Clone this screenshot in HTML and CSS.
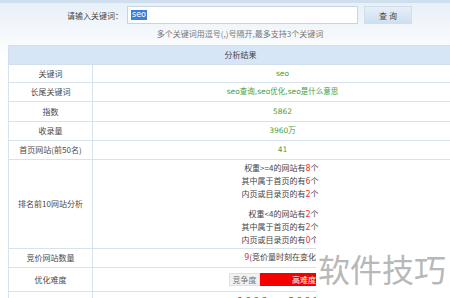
FILE: index.html
```html
<!DOCTYPE html>
<html lang="zh-CN">
<head>
<meta charset="utf-8">
<title>关键词分析</title>
<link rel="stylesheet" href="styles.css">
</head>
<body>
<div class="topband"></div>
<div class="search">
  <label class="search-label">请输入关键词：</label>
  <div class="search-input"><span class="sel">seo</span></div>
  <button class="search-btn">查 询</button>
</div>
<p class="hint">多个关键词用逗号(,)号隔开,最多支持3个关键词</p>
<table class="result">
  <colgroup><col class="col-k"><col class="col-v"></colgroup>
  <tr class="r-head"><th colspan="2">分析结果</th></tr>
  <tr class="r18"><td class="k">关键词</td><td class="v">seo</td></tr>
  <tr class="r19"><td class="k">长尾关键词</td><td class="v">seo查询,seo优化,seo是什么意思</td></tr>
  <tr class="r20"><td class="k">指数</td><td class="v">5862</td></tr>
  <tr class="r19"><td class="k">收录量</td><td class="v">3960万</td></tr>
  <tr class="r19"><td class="k">首页网站(前50名)</td><td class="v">41</td></tr>
  <tr class="r-rank"><td class="k">排名前10网站分析</td><td class="v plain">
    <div class="rank">
      <div class="rank-group">
        <div class="rank-line">权重&gt;=4的网站有<em>8</em>个</div>
        <div class="rank-line">其中属于首页的有<em>6</em>个</div>
        <div class="rank-line">内页或目录页的有<em>2</em>个</div>
      </div>
      <div class="rank-group">
        <div class="rank-line">权重&lt;4的网站有<em>2</em>个</div>
        <div class="rank-line">其中属于首页的有<em>2</em>个</div>
        <div class="rank-line">内页或目录页的有<em>0</em>个</div>
      </div>
    </div>
  </td></tr>
  <tr class="r19"><td class="k">竞价网站数量</td><td class="v plain"><span class="bid"><em>9</em>(竞价量时刻在变化中)</span></td></tr>
  <tr class="r25"><td class="k">优化难度</td><td class="v">
    <span class="diff"><span class="diff-label">竞争度</span><span class="diff-bar">高难度</span></span>
  </td></tr>
  <tr class="r-last"><td class="k"></td><td class="v price">1000 ~ 20000</td></tr>
</table>
<div class="watermark">软件技巧</div>
</body>
</html>
```
FILE: styles.css
```css
html, body {
  margin: 0;
  padding: 0;
  overflow: hidden;
}
body {
  width: 450px;
  height: 298px;
  position: relative;
  font-family: "DejaVu Sans", "Noto Sans CJK SC", sans-serif;
  font-size: 8px;
  color: #444;
  background: linear-gradient(to bottom, #e6eff8 0px, #f3f7fb 30px, #ffffff 60px);
}
.topband {
  height: 3px;
  background: #cfdfee;
}
.search {
  display: flex;
  align-items: center;
  margin-top: 3px;
  padding-left: 67px;
  height: 18px;
}
.search-label {
  width: 56px;
  text-align: right;
  font-family: "Noto Sans CJK SC", sans-serif;
  color: #444;
}
.search-input {
  box-sizing: border-box;
  width: 231px;
  height: 18px;
  margin-left: 4px;
  background: #fff;
  border: 1px solid #c8d5e1;
  display: flex;
  align-items: center;
  padding-left: 3px;
}
.sel {
  background: #3a7fe0;
  color: #fff;
  line-height: 10px;
  padding: 0 1px;
}
.search-btn {
  box-sizing: border-box;
  width: 48px;
  height: 18px;
  margin-left: 6px;
  padding: 0;
  border: 1px solid #d2dfeb;
  background: linear-gradient(to bottom, #e6eff8, #cddff0);
  font-family: "Noto Sans CJK SC", sans-serif;
  font-size: 8px;
  color: #444;
}
.hint {
  margin: 5px 0 0;
  height: 10px;
  line-height: 10px;
  text-align: center;
  padding-left: 30px;
  color: #777;
  font-family: "Noto Sans CJK SC", sans-serif;
}
.result {
  margin: 6px 0 0 8px;
  width: 465px;
  border-collapse: collapse;
  table-layout: fixed;
}
.col-k { width: 84px; }
.result th, .result td {
  border: 1px solid #d6e2ec;
  padding: 0;
  text-align: center;
  vertical-align: middle;
  line-height: 10px;
  background: #fff;
}
.result th {
  background: #d6e6f6;
  font-weight: normal;
  font-family: "Noto Sans CJK SC", sans-serif;
  color: #444;
  height: 18px;
  border-color: #d0dfee;
}
.result .k {
  font-family: "Noto Sans CJK SC", sans-serif;
  color: #4a4a4a;
}
.result .v {
  color: #3f9e3f;
  font-size: 7.5px;
}
.result .plain { color: #444; font-family: "Noto Sans CJK SC", sans-serif; font-size: 8px; }
.r18 td { height: 17px; }
.r19 td { height: 18px; }
.r20 td { height: 19px; }
.r25 td { height: 23px; }
.r-rank td { height: 86px; }
.r-last td { height: 20px; vertical-align: top; }
em {
  font-style: normal;
  color: #f03030;
  font-family: "DejaVu Sans", sans-serif;
}
.rank {
  display: inline-block;
  text-align: right;
  margin-left: -5px;
  padding-top: 1px;
}
.rank-line {
  height: 13px;
  line-height: 13px;
  overflow: hidden;
}
.rank-group + .rank-group {
  margin-top: 7px;
}
.bid {
  display: inline-block;
  margin-left: 6px;
  height: 12px;
  line-height: 12px;
  overflow: hidden;
}
.diff {
  display: inline-flex;
  height: 13px;
  line-height: 13px;
  font-family: "Noto Sans CJK SC", sans-serif;
  font-size: 8px;
  margin-left: 2px;
  vertical-align: middle;
}
.diff-label {
  box-sizing: border-box;
  width: 31px;
  background: #f2f2f2;
  border: 1px solid #e0e0e0;
  line-height: 11px;
  color: #777;
}
.diff-bar {
  width: 78px;
  background: #f50000;
  color: #fff;
  padding-left: 10px;
  box-sizing: border-box;
}
.price {
  color: #f03030 !important;
  font-size: 11px !important;
  letter-spacing: 1px;
  padding-top: 3px !important;
  line-height: 13px !important;
}
.watermark {
  position: absolute;
  left: 316px;
  top: 236px;
  right: 0;
  bottom: 0;
  background: #fff;
  padding: 15px 0 0 2px;
  font-family: "Noto Sans CJK SC", sans-serif;
  font-size: 32px;
  line-height: 34px;
  color: #b8b8b8;
}
```
